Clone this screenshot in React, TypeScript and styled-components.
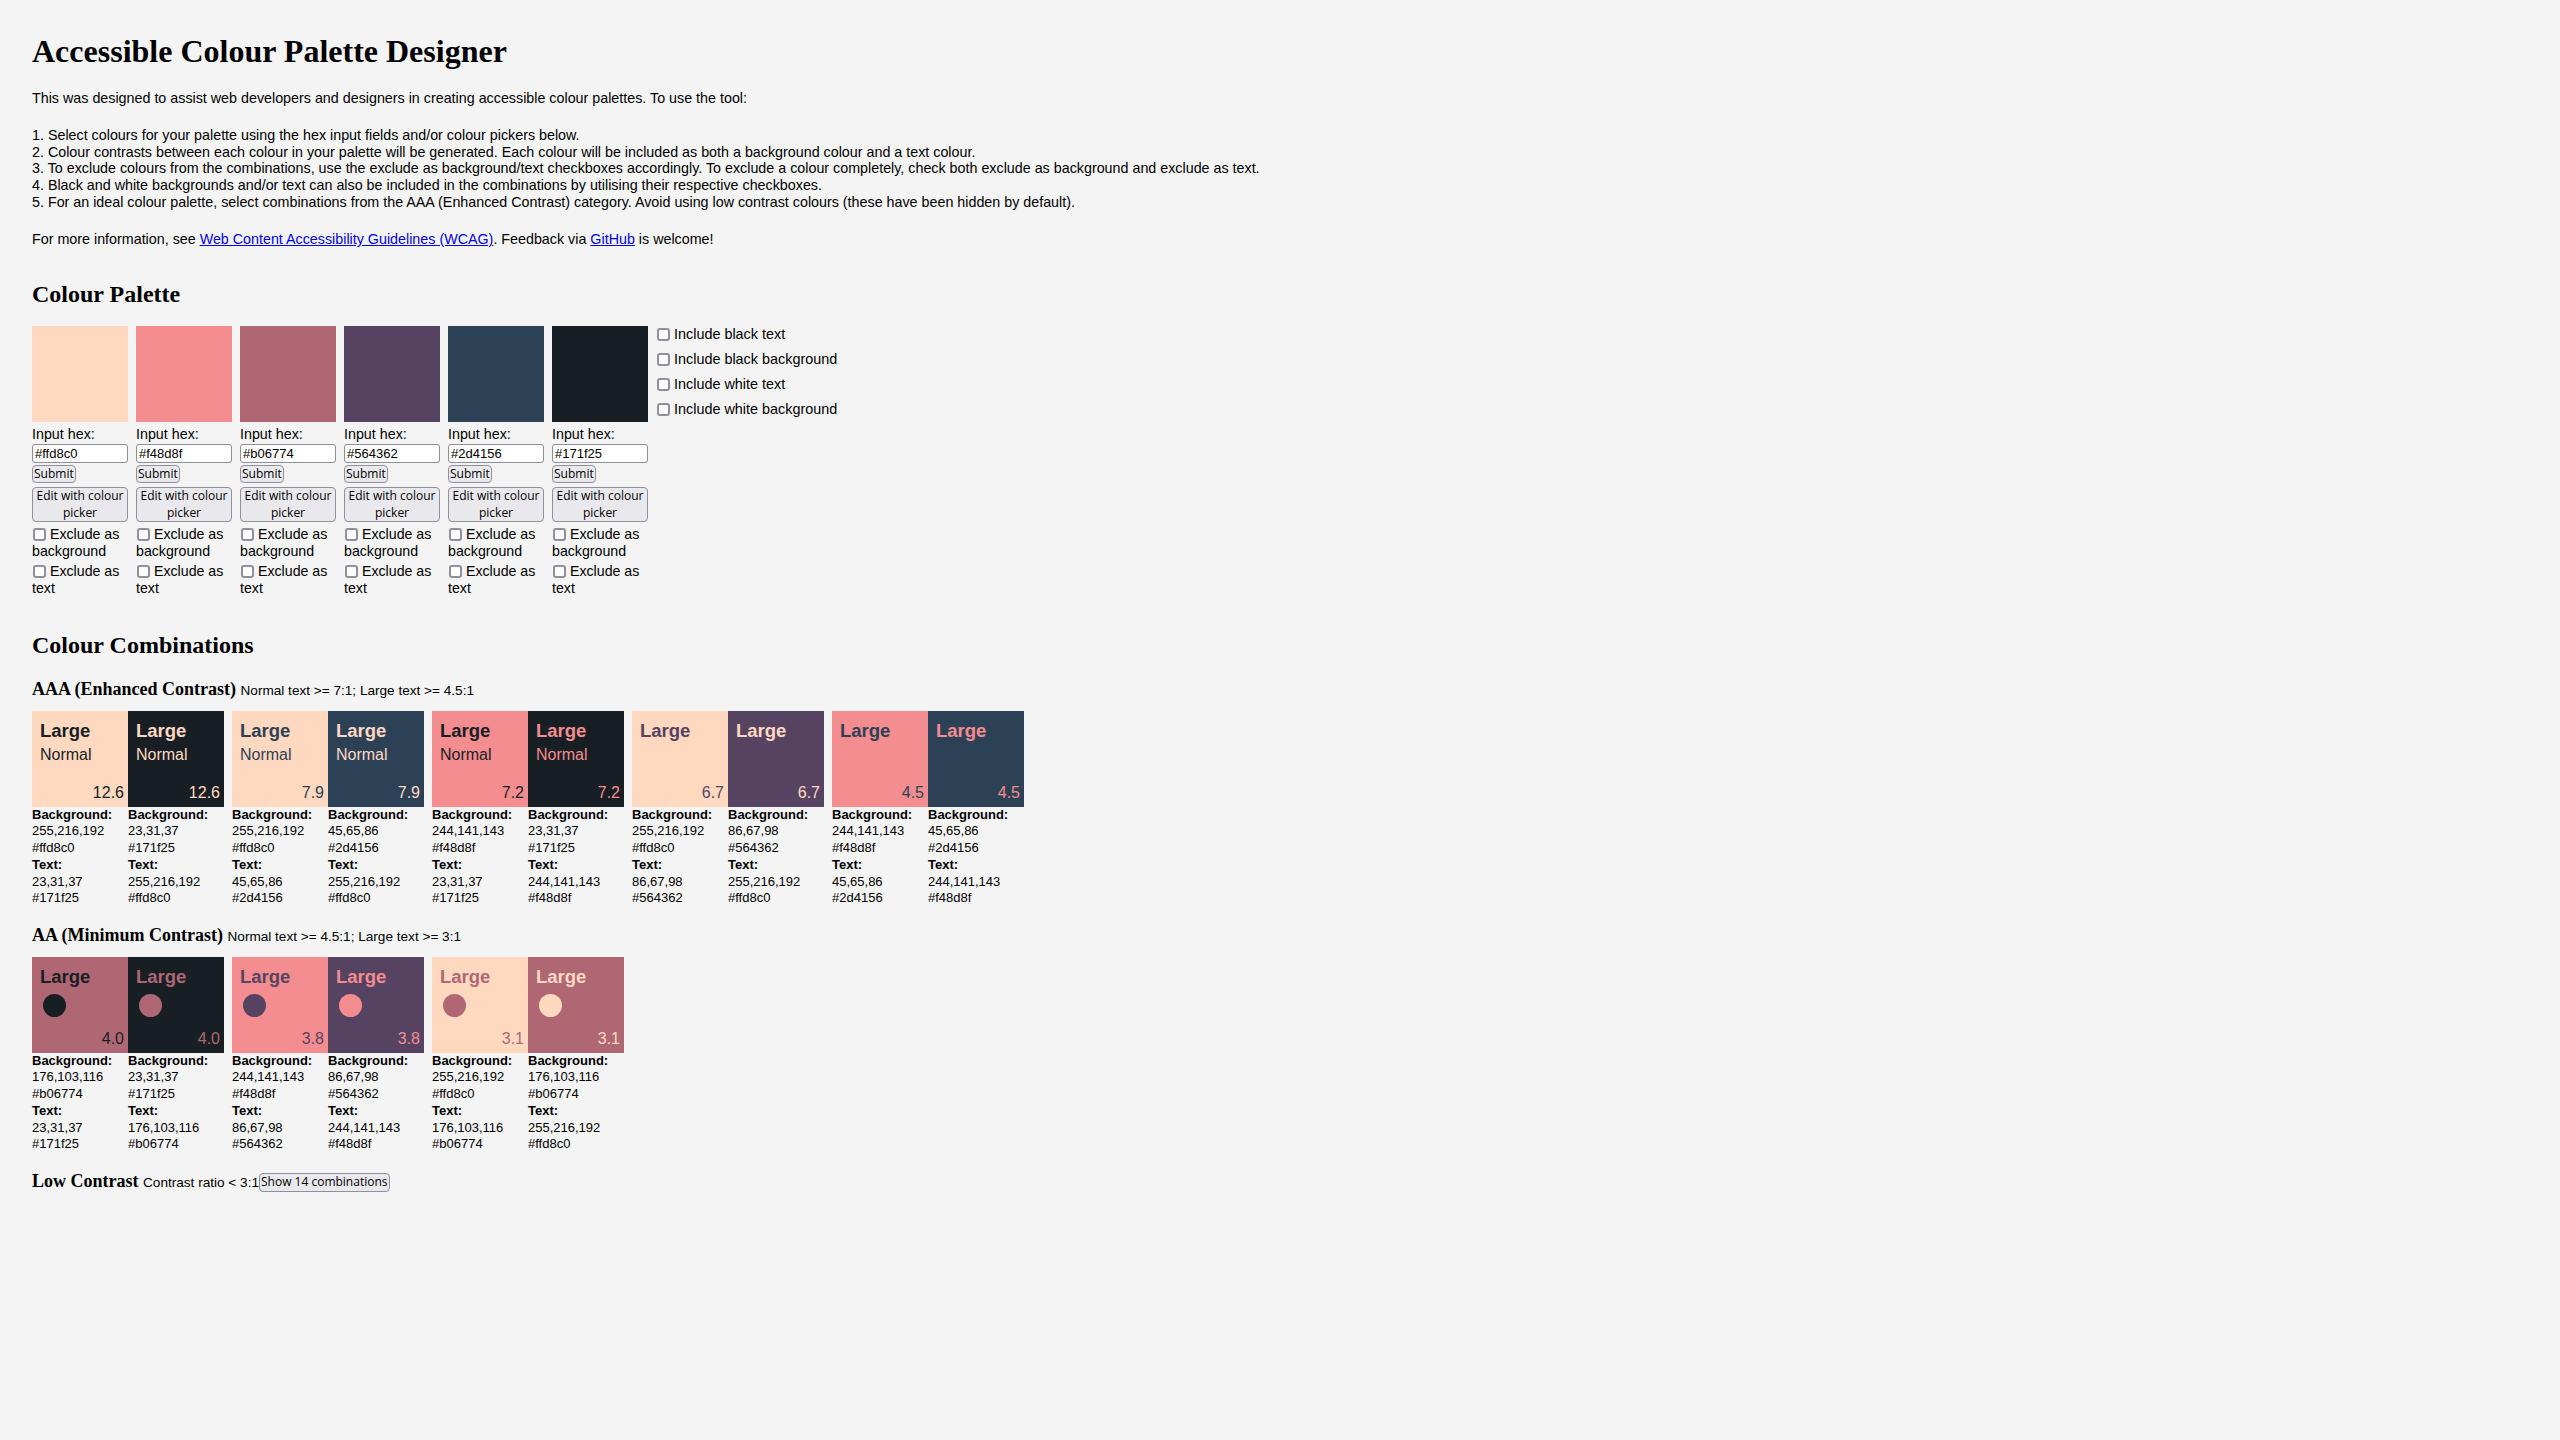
import React from "react";
import styled, { createGlobalStyle } from "styled-components";

const GlobalStyle = createGlobalStyle`
  html, body {
    margin: 0;
    background: #f4f4f4;
  }
  body {
    font-family: "Liberation Sans", Arial, sans-serif;
    color: #000;
  }
`;

const Page = styled.main`
  padding: 31px 32px 60px;
`;

const Title = styled.h1`
  margin: 0;
  font-family: "Liberation Serif", "Times New Roman", serif;
  font-weight: 700;
  font-size: 32px;
  line-height: 40px;
`;

const Para = styled.p<{ $gap?: number }>`
  margin: ${(p) => p.$gap ?? 20.5}px 0 0;
  font-size: 14.3px;
  line-height: 16.75px;
`;

const Link = styled.a`
  color: #0000ee;
  text-decoration: underline;
`;

const SectionTitle = styled.h2<{ $gap: number }>`
  margin: ${(p) => p.$gap}px 0 0;
  font-family: "Liberation Serif", "Times New Roman", serif;
  font-weight: 700;
  font-size: 24px;
  line-height: 30px;
`;

const PaletteRow = styled.div`
  display: flex;
  align-items: flex-start;
  gap: 8px;
  margin-top: 17px;
`;

const PaletteColumn = styled.div`
  width: 96px;
  display: flex;
  flex-direction: column;
  align-items: flex-start;
`;

const Swatch = styled.div<{ $color: string }>`
  width: 96px;
  height: 96px;
  background: ${(p) => p.$color};
`;

const HexLabel = styled.label`
  display: block;
  margin-top: 3.6px;
  font-size: 14.3px;
  line-height: 16.75px;
`;

const HexInput = styled.input`
  box-sizing: border-box;
  width: 96px;
  height: 19px;
  margin: 1px 0 0;
  padding: 0 2px;
  border: 1px solid #8f8f9d;
  border-radius: 3px;
  background: #fff;
  color: #000;
  font-family: "Liberation Sans", Arial, sans-serif;
  font-size: 13px;
`;

const Button = styled.button`
  margin: 0;
  padding: 0 1px;
  border: 1px solid #8f8f9d;
  border-radius: 4px;
  background: #e9e9ed;
  color: #000;
  font-family: "Open Sans", "Noto Sans", sans-serif;
  font-size: 12px;
  line-height: 16.3px;
  cursor: pointer;
`;

const SubmitButton = styled(Button)`
  margin-top: 2.4px;
`;

const PickerButton = styled(Button)`
  width: 96px;
  margin-top: 4px;
  padding: 0 1px;
`;

const CheckLabel = styled.label`
  display: block;
  margin-top: 3.7px;
  font-size: 14.2px;
  line-height: 16.75px;
`;

const Check = styled.input`
  appearance: none;
  box-sizing: border-box;
  width: 13px;
  height: 13px;
  margin: 0 0 0 1px;
  border: 2px solid #8f8f9d;
  border-radius: 3px;
  background: #fff;
  vertical-align: -2px;
`;

const IncludeList = styled.div`
  display: flex;
  flex-direction: column;
  gap: 8px;
`;

const IncludeLabel = styled.label`
  display: block;
  white-space: nowrap;
  font-size: 14.4px;
  line-height: 17px;
`;

const CategoryHeading = styled.h3<{ $gap: number }>`
  margin: ${(p) => p.$gap}px 0 0;
  font-family: "Liberation Serif", "Times New Roman", serif;
  font-weight: 700;
  font-size: 18px;
  line-height: 22px;
`;

const CategoryNote = styled.span`
  font-family: "Liberation Sans", Arial, sans-serif;
  font-weight: 400;
  font-size: 13.6px;
  line-height: 16px;
`;

const ShowButton = styled(Button)`
  vertical-align: 1px;
`;

const PairRow = styled.div`
  display: flex;
  gap: 8px;
  margin-top: 10.5px;
`;

const Pair = styled.div`
  display: flex;
`;

const ComboCard = styled.div`
  width: 96px;
`;

const ComboSwatch = styled.div<{ $bg: string; $fg: string }>`
  box-sizing: border-box;
  width: 96px;
  height: 96px;
  padding: 8px 4px 5px 8px;
  display: flex;
  flex-direction: column;
  align-items: flex-start;
  background: ${(p) => p.$bg};
  color: ${(p) => p.$fg};
`;

const LargeText = styled.span`
  font-weight: 700;
  font-size: 18.5px;
  line-height: 23px;
`;

const NormalText = styled.span`
  font-size: 16px;
  line-height: 25px;
`;

const Dot = styled.span`
  width: 23px;
  height: 23px;
  margin: 6.5px 0 0 3.3px;
  border-radius: 50%;
  background: currentColor;
`;

const Ratio = styled.span`
  margin-top: auto;
  align-self: flex-end;
  font-size: 16px;
  line-height: 18px;
`;

const Details = styled.div`
  font-size: 13px;
  line-height: 16.75px;
`;

const DetailLabel = styled.div`
  font-weight: 700;
`;

const palette = ["#ffd8c0", "#f48d8f", "#b06774", "#564362", "#2d4156", "#171f25"];

const rgb = (hex: string) => {
  const h = hex.replace("#", "");
  return [0, 2, 4].map((i) => parseInt(h.slice(i, i + 2), 16)).join(",");
};

type Marker = "normal" | "dot" | "none";
type Combo = { a: string; b: string; ratio: string; marker: Marker };

const aaa: Combo[] = [
  { a: "#ffd8c0", b: "#171f25", ratio: "12.6", marker: "normal" },
  { a: "#ffd8c0", b: "#2d4156", ratio: "7.9", marker: "normal" },
  { a: "#f48d8f", b: "#171f25", ratio: "7.2", marker: "normal" },
  { a: "#ffd8c0", b: "#564362", ratio: "6.7", marker: "none" },
  { a: "#f48d8f", b: "#2d4156", ratio: "4.5", marker: "none" },
];

const aa: Combo[] = [
  { a: "#b06774", b: "#171f25", ratio: "4.0", marker: "dot" },
  { a: "#f48d8f", b: "#564362", ratio: "3.8", marker: "dot" },
  { a: "#ffd8c0", b: "#b06774", ratio: "3.1", marker: "dot" },
];

function Card({ bg, fg, ratio, marker }: { bg: string; fg: string; ratio: string; marker: Marker }) {
  return (
    <ComboCard>
      <ComboSwatch $bg={bg} $fg={fg}>
        <LargeText>Large</LargeText>
        {marker === "normal" && <NormalText>Normal</NormalText>}
        {marker === "dot" && <Dot />}
        <Ratio>{ratio}</Ratio>
      </ComboSwatch>
      <Details>
        <DetailLabel>Background:</DetailLabel>
        <div>{rgb(bg)}</div>
        <div>{bg}</div>
        <DetailLabel>Text:</DetailLabel>
        <div>{rgb(fg)}</div>
        <div>{fg}</div>
      </Details>
    </ComboCard>
  );
}

function Pairs({ combos }: { combos: Combo[] }) {
  return (
    <PairRow>
      {combos.map((c, i) => (
        <Pair key={i}>
          <Card bg={c.a} fg={c.b} ratio={c.ratio} marker={c.marker} />
          <Card bg={c.b} fg={c.a} ratio={c.ratio} marker={c.marker} />
        </Pair>
      ))}
    </PairRow>
  );
}

export default function App() {
  return (
    <>
      <GlobalStyle />
      <Page>
        <Title>Accessible Colour Palette Designer</Title>
        <Para $gap={18.6}>
          This was designed to assist web developers and designers in creating accessible colour palettes. To use the
          tool:
        </Para>
        <Para>
          1. Select colours for your palette using the hex input fields and/or colour pickers below.
          <br />
          2. Colour contrasts between each colour in your palette will be generated. Each colour will be included as
          both a background colour and a text colour.
          <br />
          3. To exclude colours from the combinations, use the exclude as background/text checkboxes accordingly. To
          exclude a colour completely, check both exclude as background and exclude as text.
          <br />
          4. Black and white backgrounds and/or text can also be included in the combinations by utilising their
          respective checkboxes.
          <br />
          5. For an ideal colour palette, select combinations from the AAA (Enhanced Contrast) category. Avoid using
          low contrast colours (these have been hidden by default).
        </Para>
        <Para>
          For more information, see <Link href="#">Web Content Accessibility Guidelines (WCAG)</Link>. Feedback via{" "}
          <Link href="#">GitHub</Link> is welcome!
        </Para>

        <SectionTitle $gap={31.6}>Colour Palette</SectionTitle>
        <PaletteRow>
          {palette.map((c) => (
            <PaletteColumn key={c}>
              <Swatch $color={c} />
              <HexLabel>Input hex:</HexLabel>
              <HexInput type="text" defaultValue={c} />
              <SubmitButton type="button">Submit</SubmitButton>
              <PickerButton type="button">Edit with colour picker</PickerButton>
              <CheckLabel>
                <Check type="checkbox" /> Exclude as background
              </CheckLabel>
              <CheckLabel>
                <Check type="checkbox" /> Exclude as text
              </CheckLabel>
            </PaletteColumn>
          ))}
          <IncludeList>
            <IncludeLabel>
              <Check type="checkbox" /> Include black text
            </IncludeLabel>
            <IncludeLabel>
              <Check type="checkbox" /> Include black background
            </IncludeLabel>
            <IncludeLabel>
              <Check type="checkbox" /> Include white text
            </IncludeLabel>
            <IncludeLabel>
              <Check type="checkbox" /> Include white background
            </IncludeLabel>
          </IncludeList>
        </PaletteRow>

        <SectionTitle $gap={34}>Colour Combinations</SectionTitle>
        <CategoryHeading $gap={17.7}>
          AAA (Enhanced Contrast) <CategoryNote>Normal text &gt;= 7:1; Large text &gt;= 4.5:1</CategoryNote>
        </CategoryHeading>
        <Pairs combos={aaa} />
        <CategoryHeading $gap={17}>
          AA (Minimum Contrast) <CategoryNote>Normal text &gt;= 4.5:1; Large text &gt;= 3:1</CategoryNote>
        </CategoryHeading>
        <Pairs combos={aa} />
        <CategoryHeading $gap={17.3}>
          Low Contrast <CategoryNote>Contrast ratio &lt; 3:1</CategoryNote>
          <ShowButton type="button">Show 14 combinations</ShowButton>
        </CategoryHeading>
      </Page>
    </>
  );
}
